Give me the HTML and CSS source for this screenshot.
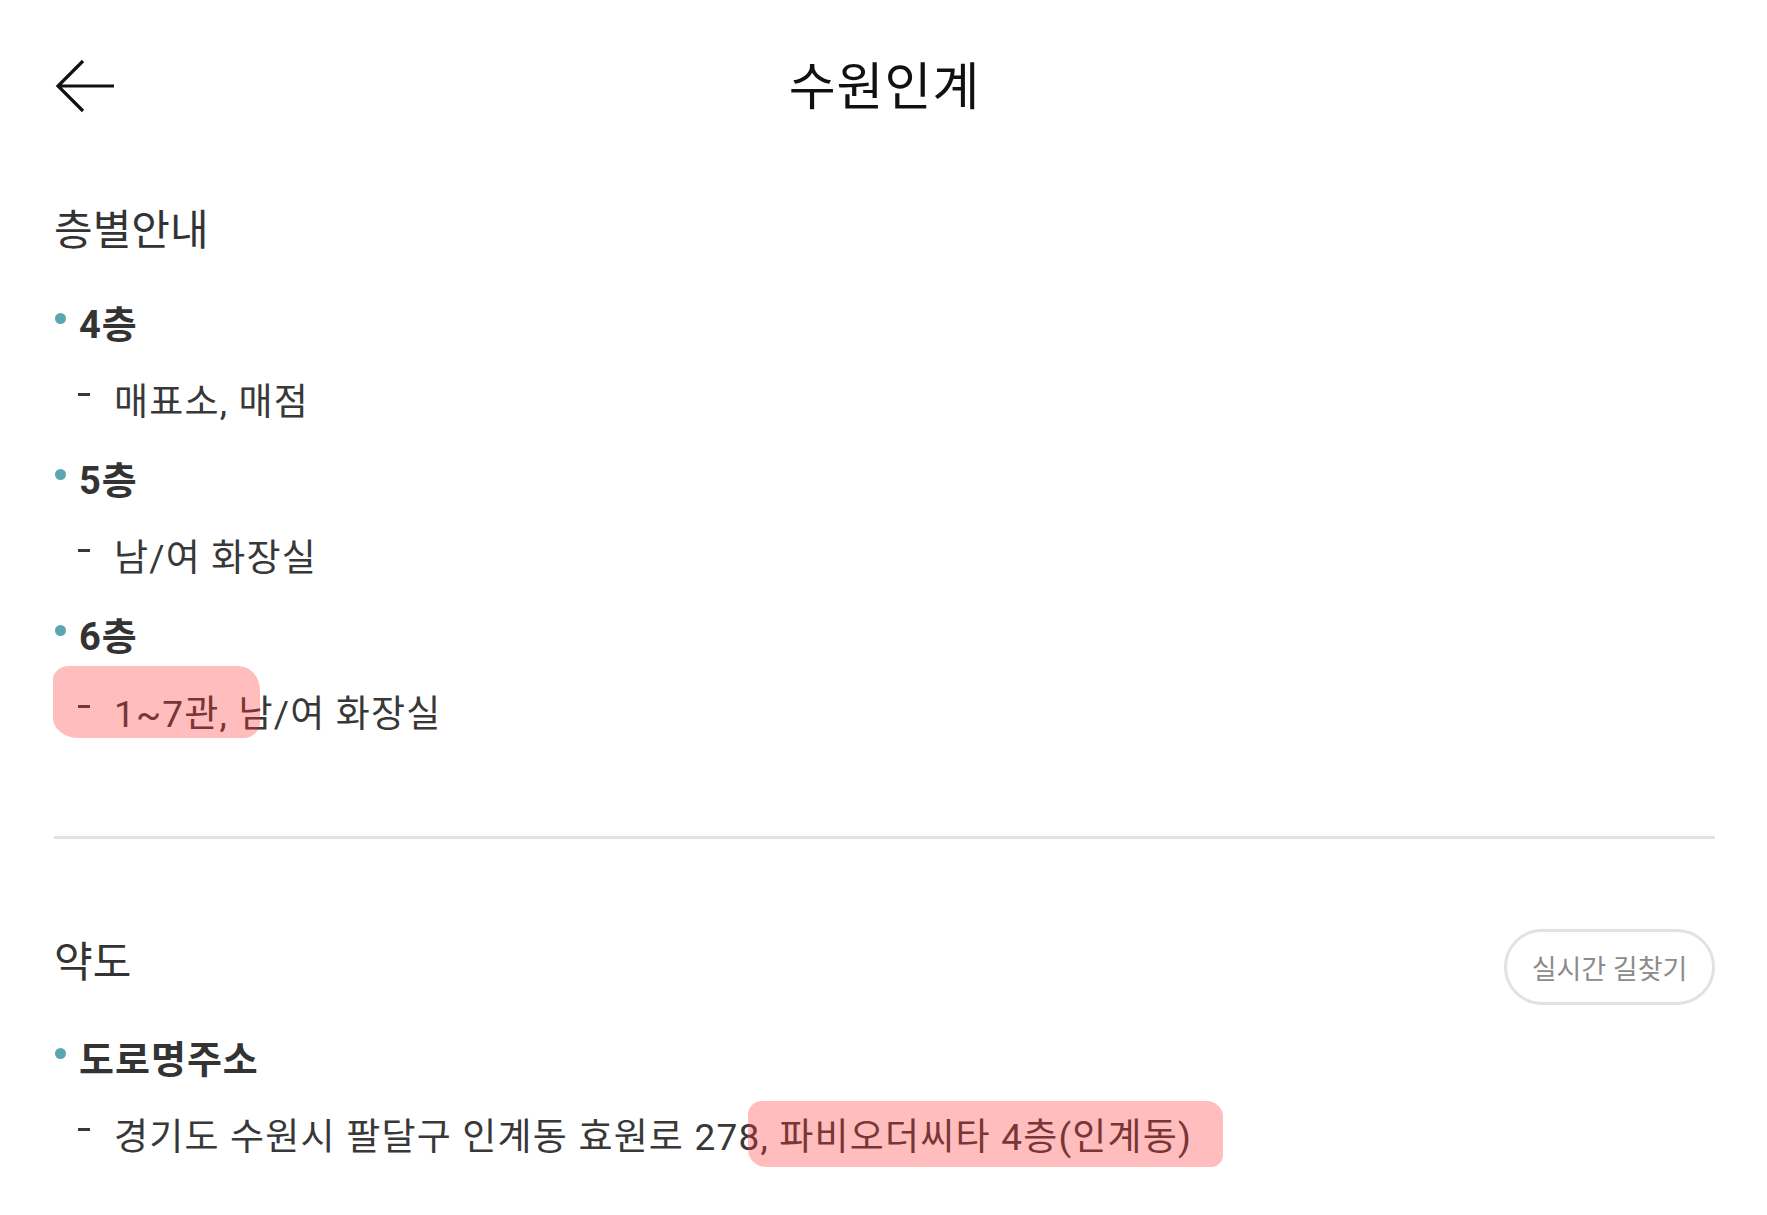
FILE: index.html
```html
<!DOCTYPE html>
<html lang="ko">
<head>
    <meta charset="UTF-8">
    <meta name="viewport" content="width=device-width, initial-scale=1.0">
    <title>수원인계</title>
    <link rel="stylesheet" href="styles.css">
</head>
<body>

    <!-- 상단 바 -->
    <header class="top-bar">
        <button class="back-btn" aria-label="뒤로">
            <svg width="60" height="54" viewBox="0 0 60 54">
                <path d="M59 27 H3 M28 2 L3 27 L28 52" fill="none" stroke="#111" stroke-width="3.2"/>
            </svg>
        </button>
        <h1 class="page-title">수원인계</h1>
        <span></span>
    </header>

    <!-- 층별안내 -->
    <section class="guide">
        <h2 class="section-title">층별안내</h2>
        <ul class="info-list">
            <li class="info-head">4층</li>
            <li class="info-sub"><span class="dash"></span>매표소, 매점</li>
            <li class="info-head">5층</li>
            <li class="info-sub"><span class="dash"></span>남/여 화장실</li>
            <li class="info-head">6층</li>
            <li class="info-sub">
                <span class="dash"></span>1~7관, 남/여 화장실
                <span class="marker marker-floor"></span>
            </li>
        </ul>
    </section>

    <hr class="divider">

    <!-- 약도 -->
    <section class="guide map-guide">
        <div class="section-head">
            <h2 class="section-title">약도</h2>
            <button class="route-btn">실시간 길찾기</button>
        </div>
        <ul class="info-list">
            <li class="info-head">도로명주소</li>
            <li class="info-sub">
                <span class="dash"></span>경기도 수원시 팔달구 인계동 효원로 278, 파비오더씨타 4층(인계동)
                <span class="marker marker-addr"></span>
            </li>
        </ul>
    </section>

</body>
</html>
```

FILE: styles.css
```css
body {
    font-family: Roboto, "Noto Sans CJK KR", sans-serif;
    background-color: #ffffff;
    color: #353535;
    margin: 0;
}

.top-bar {
    display: grid;
    grid-template-columns: 1fr auto 1fr;
    align-items: center;
    height: 176px;
    padding: 0 53px 0 55px;
}

.back-btn {
    justify-self: start;
    display: flex;
    padding: 0;
    border: none;
    background: none;
    cursor: pointer;
    margin-top: -4px;
}

.page-title {
    margin: 0;
    font-size: 51px;
    font-weight: 400;
    line-height: 60px;
    letter-spacing: 1px;
    color: #111111;
}

.guide {
    padding: 25px 52px 0 54px;
}

.section-title {
    margin: 0;
    font-size: 42px;
    font-weight: 400;
    line-height: 60px;
    color: #333333;
}

.info-list {
    list-style: none;
    margin: 21px 0 0;
    padding: 0;
}

.info-head,
.info-sub {
    position: relative;
    display: flex;
    align-items: center;
    height: 78px;
    font-size: 37px;
    letter-spacing: 1.2px;
}

.info-head {
    font-size: 38px;
    font-weight: 700;
    letter-spacing: 1px;
    color: #333333;
}

.info-head::before {
    content: "";
    width: 11px;
    height: 11px;
    margin: 0 13px 6px 1px;
    border-radius: 50%;
    background-color: #5ba6b0;
}

.info-sub {
    padding-left: 24px;
    color: #383838;
}

.dash {
    width: 12px;
    height: 3px;
    margin: 0 24px 10px 0;
    background-color: #383838;
}

/* 형광펜 표시 */
.marker {
    position: absolute;
    background-color: rgba(255, 50, 50, 0.32);
}

.marker-floor {
    left: -1px;
    top: -6px;
    width: 207px;
    height: 72px;
    border-radius: 16px 22px 16px 26px / 14px 24px 16px 20px;
}

.marker-addr {
    left: 694px;
    top: 6px;
    width: 475px;
    height: 66px;
    border-radius: 14px 16px 12px 18px;
}

.divider {
    height: 3px;
    margin: 86px 52px 0 54px;
    border: none;
    background-color: #e2e2e2;
}

.map-guide {
    padding-top: 90px;
}

.section-head {
    display: flex;
    justify-content: space-between;
    align-items: flex-start;
}

.section-head .section-title {
    margin-top: 4px;
}

.section-head + .info-list {
    margin-top: 12px;
}

.route-btn {
    width: 211px;
    height: 76px;
    padding: 0;
    font-family: inherit;
    font-size: 27px;
    color: #8c8c8c;
    background: #ffffff;
    border: 3px solid #e2e2e2;
    border-radius: 38px;
    cursor: pointer;
}
```
